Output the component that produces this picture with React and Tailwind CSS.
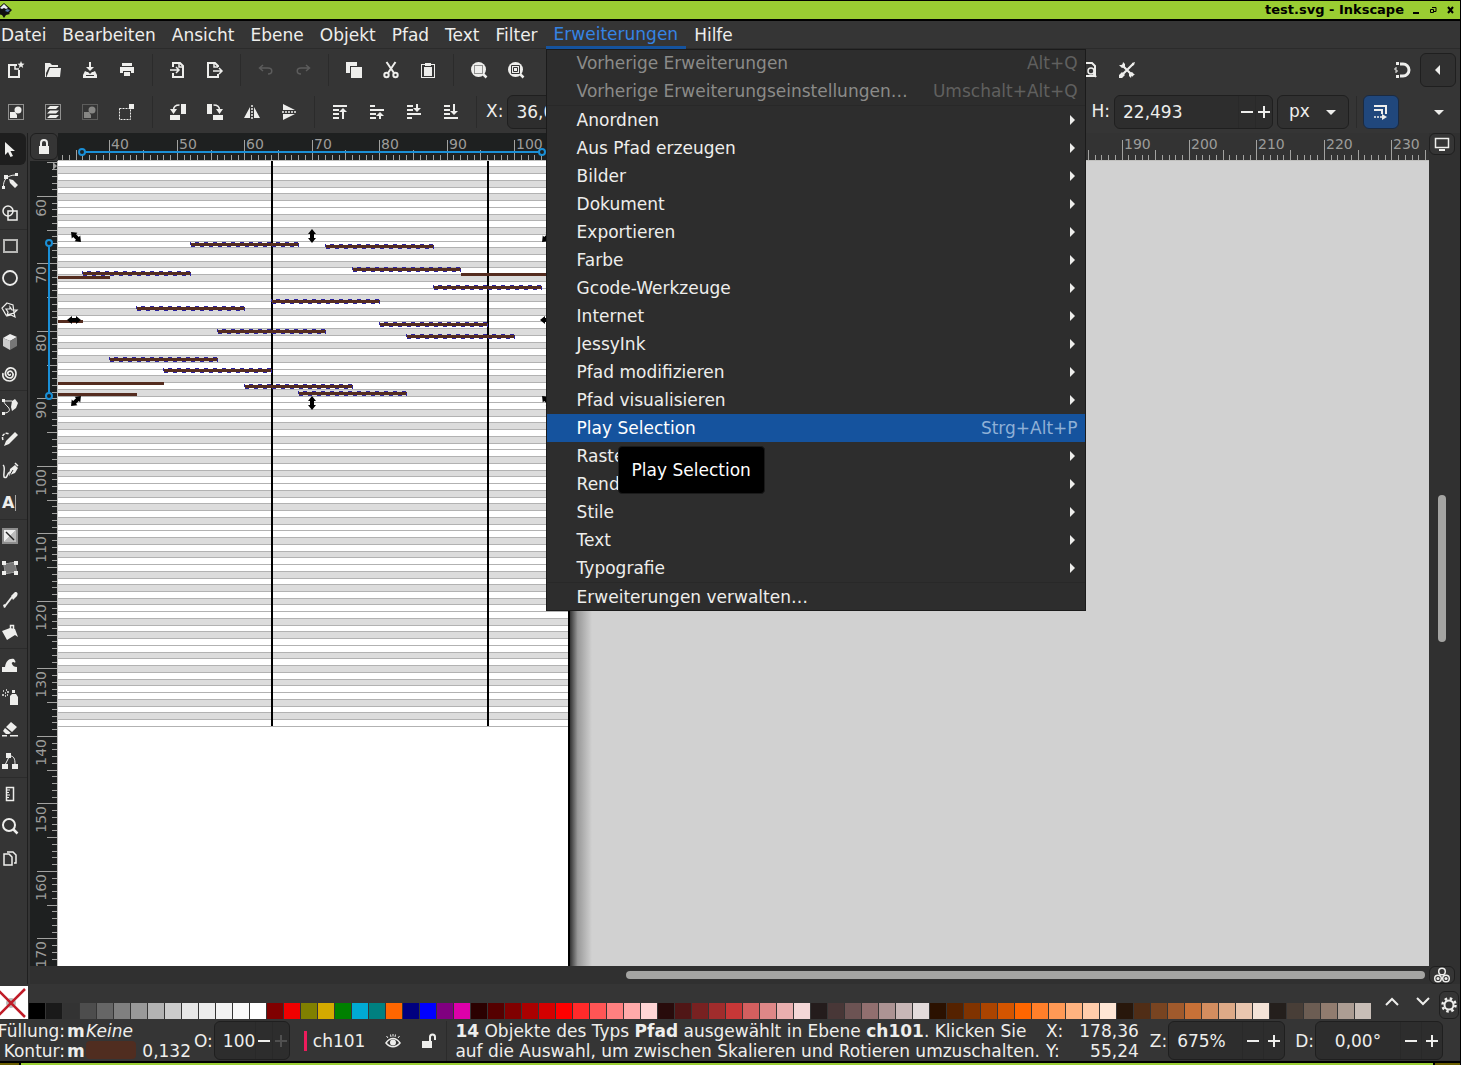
import React, { useState } from "react";

const menus = ["Datei", "Bearbeiten", "Ansicht", "Ebene", "Objekt", "Pfad", "Text", "Filter", "Erweiterungen", "Hilfe"];

const extensionItems = [
  { label: "Vorherige Erweiterungen", keys: "Alt+Q", disabled: true },
  { label: "Vorherige Erweiterungseinstellungen…", keys: "Umschalt+Alt+Q", disabled: true },
  null,
  { label: "Anordnen", sub: true },
  { label: "Aus Pfad erzeugen", sub: true },
  { label: "Bilder", sub: true },
  { label: "Dokument", sub: true },
  { label: "Exportieren", sub: true },
  { label: "Farbe", sub: true },
  { label: "Gcode-Werkzeuge", sub: true },
  { label: "Internet", sub: true },
  { label: "JessyInk", sub: true },
  { label: "Pfad modifizieren", sub: true },
  { label: "Pfad visualisieren", sub: true },
  { label: "Play Selection", keys: "Strg+Alt+P", active: true },
  { label: "Raster", sub: true },
  { label: "Rendern", sub: true },
  { label: "Stile", sub: true },
  { label: "Text", sub: true },
  { label: "Typografie", sub: true },
  null,
  { label: "Erweiterungen verwalten…" },
];

const palette = (
  "000000 1a1a1a 333333 4d4d4d 666666 808080 999999 b3b3b3 cccccc e6e6e6 ececec f2f2f2 f9f9f9 ffffff " +
  "800000 f00000 808000 d4aa00 008000 00aad4 008080 ff6600 000080 0000ff 800080 dd00aa " +
  "2b0000 550000 800000 aa0000 d40000 ff0000 ff2a2a ff5555 ff8080 ffaaaa ffd5d5 " +
  "280b0b 501616 782121 a02c2c c83737 d35f5f de8787 e9afaf f4d7d7 " +
  "241c1c 483737 6c5353 916f6f ac9393 c8b7b7 e3dbdb " +
  "2b1100 552200 803300 aa4400 d45500 ff6600 ff7f2a ff9955 ffb380 ffccaa ffe6d5 " +
  "28170b 502d16 784421 a05a2c c87137 d38d5f deaa87 e9c6af f4e3d7 " +
  "241f1c 483e37 6c5d53 917c6f ac9d93 c8beb7"
).split(" ");

const dotted = <rect x="0.5" y="0.5" width="15" height="15" fill="none" stroke="currentColor" strokeDasharray="1 1" />;
const line = { fill: "none", stroke: "currentColor", strokeWidth: 1.5 };

// all drawn on a 16 x 16 grid
const icons = {
  new: (
    <>
      <path d="M9 3H1v12h10V8" {...line} strokeWidth="2" />
      <path d="M7 3v4h4" {...line} />
      <path d="M13 -1l1 2.500 2.500.2-2 1.700.7 2.600-2.200-1.400-2.200 1.400.7-2.600-2-1.700 2.500-.2z" />
    </>
  ),
  open: <path d="M0 1h5l2 2h6v2H4L1 11v4H0zM5 6h11l-1 9H1.500z" />,
  save: <path d="M7 0h2v5h3L8 9 4 5h3zM3 9l2 1h1l2 2 2-2h1l2-1 2 4v3H1v-3zM4 13v1h8v-1z" fillRule="evenodd" />,
  print: <path d="M3 1h10v3H3zM1 5h14v6h-3V9H4v2H1zM5 10h6v4H5z" />,
  import: (
    <>
      <path d="M3 5V1h7l3 3v11H3v-4" {...line} strokeWidth="2" />
      <path d="M9 1v4h4M0 8h8M6 5l3 3-3 3" {...line} />
    </>
  ),
  export: (
    <>
      <path d="M11 5V4L8 1H1v14h10v-3" {...line} strokeWidth="2" />
      <path d="M6 9h9M12 6l3 3-3 3M7 1v4h4" {...line} />
    </>
  ),
  undo: <path d="M5 3L1.500 6 5 9M2 6h8c5 0 5 6 0 6" {...line} />,
  redo: <path d="M11 3l3.500 3L11 9M14 6H6c-5 0-5 6 0 6" {...line} />,
  copy: <path d="M0 0h11v4H4v7H0zM5 5h11v11H5z" />,
  cut: (
    <>
      <path d="M3.500 0l7.500 11M12.500 0L5 11" {...line} strokeWidth="2" />
      <circle cx="3.500" cy="13" r="2.200" {...line} strokeWidth="2" />
      <circle cx="12.500" cy="13" r="2.200" {...line} strokeWidth="2" />
    </>
  ),
  paste: (
    <>
      <rect x="1.500" y="2.500" width="13" height="13" fill="none" stroke="currentColor" />
      <path d="M5 1h6v3H5zM4 5h8v9H4z" />
    </>
  ),
  zoomSel: (
    <>
      <circle cx="7.500" cy="7.500" r="7.500" />
      <path d="M11 11l4.500 4.500" {...line} strokeWidth="2.500" />
      <rect x="3.500" y="3.500" width="8" height="8" fill="none" stroke="#333" strokeDasharray="1 1" />
    </>
  ),
  zoomDraw: (
    <>
      <circle cx="7.500" cy="7.500" r="7.500" />
      <path d="M11 11l4.500 4.500" {...line} strokeWidth="2.500" />
      <path d="M3.500 3.500h8v8h-8zM5.500 5.500h4v4h-4z" fill="none" stroke="#333" />
    </>
  ),
  docProps: (
    <>
      <path d="M2 1h8l3 3v10H2z" {...line} strokeWidth="2" />
      <circle cx="9" cy="9" r="3" {...line} />
      <path d="M11 11l3 4" {...line} strokeWidth="2" />
    </>
  ),
  tools: (
    <>
      <path d="M3 3l11 11M14.500 1.500L2 14" {...line} strokeWidth="2.200" />
      <path d="M0 3l3 3 3-1V2L4 0l-.5 2.500L2 3zM16 13l-3-3-3 1v3l2 2 .5-2.500L14 13zM13 1l3-1-1 3-2 1zM0 13l3-3 3 3-3 3H0z" />
    </>
  ),
  snap: (
    <>
      <path d="M6 2h3a6 6 0 010 12H6" {...line} strokeWidth="3" />
      <path d="M2 0h3v3H2zM2 13h3v3H2z" />
      <path d="M3 6H1v2h2v2H1" {...line} strokeWidth="1" />
    </>
  ),
  selAll: (
    <>
      {dotted}
      <circle cx="10" cy="6" r="3.500" />
      <path d="M2 8h5l2 3v3H2z" />
    </>
  ),
  selLayers: (
    <>
      {dotted}
      <path d="M5 2h9l-3 3H2zM5 6.500h9l-3 3H2zM5 11h9l-3 3H2z" />
    </>
  ),
  deselect: (
    <>
      <rect x="0.500" y="4.500" width="11" height="11" {...line} strokeWidth="1" strokeDasharray="2 1" />
      <path d="M10 0h5v5h-5z" />
    </>
  ),
  rotL: (
    <>
      <path d="M11 0h5v10h-5zM0 11h10v5H0zM0 5h7L3.500 10z" />
      <path d="M3.500 6c0-3 2-5 6-5" {...line} />
    </>
  ),
  rotR: (
    <>
      <path d="M0 0h5v10H0zM6 11h10v5H6zM9 5h7l-3.500 5z" />
      <path d="M12.500 6c0-3-2-5-6-5" {...line} />
    </>
  ),
  flipH: (
    <>
      <path d="M6 3v11H0zM10 3v11h6z" />
      <path d="M8 1v14" {...line} strokeDasharray="2 1" />
    </>
  ),
  flipV: (
    <>
      <path d="M2 6h12L2 0zM2 10h12L2 16z" />
      <path d="M1 8h14" {...line} strokeDasharray="2 1" />
    </>
  ),
  toTop: (
    <>
      <path d="M1 2h14M1 6h6M1 10h6M1 14h6" {...line} strokeWidth="2" />
      <path d="M10 15h2V8h3l-4-4-4 4h3z" />
    </>
  ),
  raise: (
    <>
      <path d="M1 2h5M1 6h14M1 10h6M1 14h6" {...line} strokeWidth="2" />
      <path d="M10 15h2v-3h3l-4-4-4 4h3z" />
    </>
  ),
  lower: (
    <>
      <path d="M1 2h6M1 6h6M1 10h14M1 14h5" {...line} strokeWidth="2" />
      <path d="M10 0h2v4h3l-4 4-4-4h3z" />
    </>
  ),
  toBottom: (
    <>
      <path d="M1 2h6M1 6h6M1 10h6M1 14h14" {...line} strokeWidth="2" />
      <path d="M10 0h2v7h3l-4 4-4-4h3z" />
    </>
  ),
  select: <path d="M3 1l10 9H8.500l2.500 5-2.500 1L6 11l-3 3z" />,
  node: (
    <>
      <path d="M1.500 14C1 7 5 2 14 2" {...line} strokeWidth="1" />
      <path d="M0 13h3v3H0zM13 0h3v3h-3zM2 2h4v4H2zM7 6l4 1 5 5-3 3-5-5z" />
    </>
  ),
  shapes: (
    <>
      <circle cx="6" cy="6" r="5" {...line} />
      <rect x="6" y="6" width="9" height="9" {...line} />
    </>
  ),
  rect: <rect x="2" y="2" width="13" height="12" {...line} strokeWidth="2" stroke="#b8b8b6" />,
  ellipse: <circle cx="8" cy="8" r="7" {...line} strokeWidth="1.800" />,
  star: <path d="M5 1l6 2 1 8-8 2-4-7zM8 5l2 3h5l-3 3 1 4-4-2-4 1 1-4-2-3 4 0z" {...line} strokeWidth="1.200" />,
  box: (
    <>
      <path d="M8 0l7 3-7 4-7-3z" fill="#eee" />
      <path d="M1 4l7 3v9l-7-4z" fill="#ccc" />
      <path d="M15 3v9l-7 4V7z" fill="#777" />
    </>
  ),
  spiral: <path d="M8 8c1 1-1 2-2 0s2-4 4-2 1 6-2 6-6-3-4-7 7-4 9-1 1 10-5 11C3 15 0 12 1 7" {...line} strokeWidth="1.600" />,
  pen: (
    <>
      <path d="M2 14c5 0 7-3 4-6S2 4 2 2h8" {...line} strokeWidth="1" />
      <path d="M0 0h3v3H0zM0 13h3v3H0zM10 2l3-2 3 4-2 5-4 3-1-4z" />
    </>
  ),
  pencil: (
    <>
      <path d="M2 15l2-5 9-9 3 3-9 9z" />
      <path d="M1 9C-1 4 3 1 7 3" {...line} strokeDasharray="3 1" />
    </>
  ),
  calligraphy: (
    <>
      <path d="M1 2c3 2 0 9 1 12 4 2 2-3 6-5" {...line} />
      <path d="M7 13l1-7 5-4 3 3-3 5-5 2z" />
      <path d="M8 12l3-5" fill="none" stroke="#333" />
      <path d="M13 0l3 3" {...line} />
    </>
  ),
  gradient: (
    <>
      <rect width="16" height="16" fill="#8e8e8e" />
      <path d="M2 2h12L8 8zM2 2v12l6-6z" fill="#eee" />
      <path d="M14 2v12H2z" fill="#bbb" />
      <path d="M4 4l8 8" stroke="#222" strokeWidth="1.500" />
    </>
  ),
  mesh: (
    <>
      <path d="M2 3c4 2 8-2 12 0-2 4 2 7 0 10-4-2-8 2-12 0 2-4-1-7 0-10z" fill="#777" stroke="#999" />
      <path d="M0 1h4v4H0zM12 1h4v4h-4zM0 11h4v4H0zM12 11h4v4h-4z" />
    </>
  ),
  dropper: (
    <>
      <path d="M3 14l7-9" {...line} strokeWidth="2" />
      <path d="M9 4l4-4c3 0 3 2 2 4l-4 4zM1 13l2-1 1 3-2 1z" />
    </>
  ),
  bucket: (
    <>
      <path d="M0 7l8-3 5 1 3 8-3-2-8 5z" />
      <path d="M8.500 9V1.500h3V7" {...line} strokeWidth="1.500" />
    </>
  ),
  tweak: <path d="M0 10h3c1-6 4-9 9-8 1 2 2 2 1 4-1-2-4-1-3 1 1 2 2 3 5 3v5H0z" />,
  spray: (
    <>
      <path d="M8 7l2-2h4l2 3v8H8zM10 1h3v3h-3z" />
      <path d="M1 2h1M4 1h1M3 4h1M0 6h2M5 3h2M5 6h1M3 7h1" {...line} />
    </>
  ),
  eraser: <path d="M9 1l6 5-5 5-6-5zM3 7l6 5-2 1H4L1 10zM0 14h5v1.500H0zM8 14h8v1.500H8z" />,
  connector: (
    <>
      <path d="M3 12L7 4M8 3c4 0 5 3 5 8" {...line} strokeWidth="1" />
      <path d="M4 0h5v5H4zM0 11h6v5H0zM10 11h6v5h-6z" />
    </>
  ),
  measure: (
    <>
      <rect x="4.500" y="1.500" width="7" height="13" {...line} />
      <path d="M5 4h3M5 6.500h2M5 9h3M5 11.500h2" {...line} strokeWidth="1" />
    </>
  ),
  zoom: (
    <>
      <circle cx="7" cy="7" r="6" {...line} strokeWidth="2" />
      <path d="M11 11l4.500 4.500" {...line} strokeWidth="2.500" />
    </>
  ),
  pages: (
    <>
      <path d="M2 4h5l3 3v8H2z" {...line} />
      <path d="M5 2h6l3 3v8h-2" {...line} />
    </>
  ),
  scale: (
    <>
      <path d="M1 2h12v8M1 6h8v4" {...line} strokeWidth="2" />
      <path d="M1 13h9" {...line} strokeDasharray="2 1" />
      <path d="M9 10l5 3-5 3z" />
    </>
  ),
  lock: <path d="M3 7h1V4a4 4 0 018 0v3h1v8H3zM6 7h4V4a2 2 0 00-4 0z" fillRule="evenodd" />,
  unlock: <path d="M1 8h7V4a3.500 3.500 0 017 0v3h-2V4a1.500 1.500 0 00-3 0v4h1v7H1z" />,
  monitor: (
    <>
      <rect x="1.500" y="2.500" width="13" height="9" {...line} />
      <path d="M5 13h6v2H5z" />
    </>
  ),
  cms: (
    <>
      <circle cx="8" cy="4.500" r="3.300" {...line} />
      <circle cx="4" cy="11.500" r="3.300" {...line} />
      <circle cx="12" cy="11.500" r="3.300" {...line} />
      <circle cx="4" cy="11.500" r="1.500" />
      <circle cx="12" cy="11.500" r="1.500" />
    </>
  ),
  gear: (
    <>
      <circle cx="8" cy="8" r="4.500" {...line} strokeWidth="2" />
      <circle cx="8" cy="8" r="6.500" {...line} strokeWidth="2.500" strokeDasharray="2.500 2.600" />
    </>
  ),
  eye: (
    <>
      <path d="M1 10c4-6 10-6 14 0-4 5-10 5-14 0z" {...line} />
      <circle cx="8" cy="9.500" r="3" />
      <path d="M3 5L1.500 3M6 4l-.5-2.500M10 4l.5-2.500M13 5l1.500-2M8 3.500V1" {...line} strokeWidth="1" />
    </>
  ),
  up: <path d="M2 11l6-6 6 6" {...line} strokeWidth="2" />,
  down: <path d="M2 4l6 6 6-6" {...line} strokeWidth="2" />,
  caretDown: <path d="M3 6h10l-5 5z" />,
  caretLeft: <path d="M10 3v10L5 8z" />,
  minus: <path d="M2 8h12" {...line} strokeWidth="2" />,
  plus: <path d="M2 8h12M8 2v12" {...line} strokeWidth="2" />,
};

const Icon = ({ name, className = "" }) => (
  <svg viewBox="0 0 16 16" fill="currentColor" className={`size-4 shrink-0 overflow-visible ${className}`} aria-hidden="true">
    {icons[name]}
  </svg>
);

const ToolButton = ({ name, color = "" }) => (
  <button aria-label={name} className={`flex h-9 w-[37px] shrink-0 items-center justify-center ${color}`}>
    <Icon name={name} />
  </button>
);

const Separator = () => (
  <div className="flex h-8 w-[14px] shrink-0 justify-center">
    <div className="w-px bg-[#2b2b2b]" />
  </div>
);

const SpinBox = ({ label, value, width, gap = "mr-1", buttons = "w-[21px]", center, noPlus, height = "h-[34px]" }) => (
  <div className="flex shrink-0 items-center">
    <label htmlFor={`spin-${label}`} className={gap}>{label}:</label>
    <div className={`flex items-center overflow-hidden rounded-md border border-[#1f1f1f] bg-[#2d2d2d] ${width} ${height}`}>
      <input
        id={`spin-${label}`}
        defaultValue={value}
        className={`h-full min-w-0 flex-1 bg-transparent outline-none ${center ? "text-center" : "pl-2"}`}
      />
      <button aria-label="weniger" className={`flex h-full items-center justify-center border-l border-[#292929] ${buttons}`}>
        <Icon name="minus" />
      </button>
      <button
        aria-label="mehr"
        className={`flex h-full items-center justify-center border-l border-[#292929] ${buttons} ${noPlus ? "text-[#505050]" : ""}`}
      >
        <Icon name="plus" />
      </button>
    </div>
  </div>
);

const TitleBar = () => (
  <header className="flex h-[21px] shrink-0 items-center border-t border-b-2 border-black bg-[#9acd32] text-[13px] font-bold text-black">
    <svg viewBox="0 0 16 16" className="-ml-1 size-4" aria-hidden="true">
      <path d="M8 1l8 7-3 3 1 1-4 1-2 3-2-3-4-1 1-1-3-3z" fill="#111" />
      <path d="M8 2l4 4-2 1-2-1-2 1-2-1z" fill="#e8eef5" />
      <path d="M11 7l3 1-2 2-3-1z" fill="#5577aa" />
    </svg>
    <h1 className="ml-auto">test.svg - Inkscape</h1>
    <div className="ml-1 flex gap-px pr-[2px]">
      <button aria-label="Minimieren" className="size-4">
        <svg viewBox="0 0 16 16" className="size-4"><path d="M5 10h6v2H5z" /></svg>
      </button>
      <button aria-label="Wiederherstellen" className="size-4">
        <svg viewBox="0 0 16 16" className="size-4"><path d="M7 5.500h4v4h-2M5.500 7.500h3v3h-3z" fill="none" stroke="#000" /></svg>
      </button>
      <button aria-label="Schließen" className="size-4">
        <svg viewBox="0 0 16 16" className="size-4"><path d="M6 5l5 6M11 5l-5 6" stroke="#000" strokeWidth="2" /></svg>
      </button>
    </div>
  </header>
);

const ExtensionMenu = () => (
  <div className="absolute top-full left-0 z-10 mt-px w-[540px] bg-[#2d2d2d]" role="menu">
    {extensionItems.map((item, i) =>
      item === null ? (
        <div key={i} className="h-px bg-[#282828]" />
      ) : (
        <button
          key={i}
          role="menuitem"
          disabled={item.disabled}
          className={`flex h-7 w-full items-center justify-between pt-[2px] pr-2 pl-[31px] ${item.active ? "bg-[#15539e] text-white" : ""} ${item.disabled ? "text-[#8b8b89]" : ""}`}
        >
          <span>{item.label}</span>
          {item.keys && <span className={item.active ? "text-[#8fb0d6]" : "text-[#60605f]"}>{item.keys}</span>}
          {item.sub && (
            <svg viewBox="0 0 5 10" className="mr-[3px] mb-[2px] h-[10px] w-[5px]" fill="currentColor"><path d="M0 0l5 5-5 5z" /></svg>
          )}
        </button>
      )
    )}
    <div className="pointer-events-none absolute inset-0 border border-[#1b1b1b]" />
    <div role="tooltip" className="absolute top-[397px] left-[72px] rounded-sm border border-[#1a1a1a] bg-black px-[13px] py-[10px] leading-[26px] text-white">
      Play Selection
    </div>
  </div>
);

const MenuBar = () => {
  const [open] = useState("Erweiterungen");
  return (
    <nav className="-ml-[7px] flex h-7 shrink-0 items-stretch border-b border-[#2b2b2b]">
      {menus.map((name) => (
        <div key={name} className="relative flex">
          <button className={`px-2 ${open === name ? "-mb-px border-b-3 border-[#15539e] pt-px text-[#3584e4]" : "pt-[2px]"}`}>{name}</button>
          {open === name && <ExtensionMenu />}
        </div>
      ))}
    </nav>
  );
};

const CommandBar = () => (
  <div className="flex h-[42px] shrink-0 items-center pr-1">
    <div className="-ml-[3px] flex items-center">
      {["new", "open", "save", "print"].map((n) => <ToolButton key={n} name={n} />)}
      <Separator />
      {["import", "export"].map((n) => <ToolButton key={n} name={n} />)}
      <Separator />
      {["undo", "redo"].map((n) => <ToolButton key={n} name={n} color="text-[#5c5c5c]" />)}
      <Separator />
      {["copy", "cut", "paste"].map((n) => <ToolButton key={n} name={n} />)}
      <Separator />
      {["zoomSel", "zoomDraw"].map((n) => <ToolButton key={n} name={n} />)}
    </div>
    <div className="grow-[535]" />
    <ToolButton name="docProps" />
    <ToolButton name="tools" />
    <div className="grow-[237]" />
    <ToolButton name="snap" />
    <button aria-label="Einrastleiste" className="flex h-[34px] w-9 items-center justify-center rounded-md border border-[#1f1f1f] bg-[#303030]">
      <Icon name="caretLeft" />
    </button>
  </div>
);

const ControlBar = () => (
  <div className="flex h-[42px] shrink-0 items-center pr-[3px]">
    <div className="-ml-[3px] flex items-center">
      <ToolButton name="selAll" />
      <ToolButton name="selLayers" />
      <ToolButton name="selAll" color="text-[#868684]" />
      <ToolButton name="deselect" />
      <Separator />
      {["rotL", "rotR", "flipH", "flipV"].map((n) => <ToolButton key={n} name={n} />)}
      <Separator />
      {["toTop", "raise", "lower", "toBottom"].map((n) => <ToolButton key={n} name={n} />)}
      <Separator />
      <div className="ml-[3px]">
        <SpinBox label="X" value="36,000" width="w-[158px]" />
      </div>
    </div>
    <div className="ml-auto flex items-center">
      <SpinBox label="H" value="22,493" width="w-[159px]" buttons="w-[17px]" />
      <div className="relative ml-1 flex items-center">
        <select aria-label="Einheit" className="h-[34px] w-[72px] appearance-none rounded-md border border-[#1f1f1f] bg-[#303030] pl-[11px]">
          <option>px</option>
        </select>
        <Icon name="caretDown" className="pointer-events-none absolute right-[10px]" />
      </div>
      <Separator />
      <button aria-label="Konturbreite skalieren" className="flex h-[34px] w-9 items-center justify-center rounded-md border border-[#1b2a40] bg-[#20477c]">
        <Icon name="scale" />
      </button>
      <button aria-label="Mehr" className="ml-[22px] flex h-9 w-9 items-center justify-center">
        <Icon name="caretDown" />
      </button>
    </div>
  </div>
);

const toolGroups = [
  ["select", "node", "shapes"],
  ["rect", "ellipse", "star", "box", "spiral"],
  ["pen", "pencil", "calligraphy", "text"],
  ["gradient", "mesh", "dropper", "bucket"],
  ["tweak", "spray", "eraser", "connector"],
  ["measure", "zoom", "pages"],
];

const ToolBox = () => (
  <aside className="w-[28px] shrink-0 divide-y divide-[#2b2b2b] border-r border-[#1f1f1f]">
    {toolGroups.map((group, i) => (
      <div key={i}>
        {group.map((name) => (
          <button
            key={name}
            aria-label={name}
            className={`flex h-8 w-[26px] items-center rounded-r-md pl-[2px] ${name === "select" ? "bg-[#1e1e1e]" : ""}`}
          >
            {name === "text" ? (
              <span className="flex items-center text-base leading-4 font-bold">
                A<i className="ml-px h-4 w-px bg-[#aaa]" />
              </span>
            ) : (
              <Icon name={name} />
            )}
          </button>
        ))}
      </div>
    ))}
  </aside>
);

// one user unit in screen pixels at the current zoom
const UNIT = 6.748;
const tickLength = (v) => (v % 10 === 0 ? 20 : v % 5 === 0 ? 10 : 5);
const range = (from, to) => Array.from({ length: to - from + 1 }, (_, i) => from + i);
const underMenu = (v) => v > 100 && v < 190;

const HorizontalRuler = () => (
  <svg className="h-7 min-w-0 flex-1 bg-[#333333]" aria-hidden="true">
    <rect width="512" height="28" fill="#1e2020" />
    {range(33, 235).map((v) => {
      const x = Math.round(51.300 + (v - 40) * UNIT);
      return (
        <g key={v}>
          <rect x={x} y={27 - tickLength(v)} width="1" height={tickLength(v)} fill="#a2a2a0" />
          {v % 10 === 0 && !underMenu(v) && <text x={x + 2} y="16" fontSize="14" fill="#9c9c9a">{v}</text>}
        </g>
      );
    })}
    <rect y="27" width="100%" height="1" fill="#c0c0be" />
    <g fill="none" stroke="#1a8fd6" strokeWidth="2">
      <path d="M27 19h454" />
      <circle cx="24" cy="19" r="3" />
      <circle cx="484" cy="19" r="3" />
    </g>
  </svg>
);

const VerticalRuler = () => (
  <svg className="h-full w-[28px] shrink-0 bg-[#1e2020]" aria-hidden="true">
    {range(55, 173).map((v) => {
      const y = Math.round(35 + (v - 60) * UNIT);
      return (
        <g key={v}>
          <rect x={27 - tickLength(v)} y={y} width={tickLength(v)} height="1" fill="#a2a2a0" />
          {v % 10 === 0 && (
            <text transform={`translate(16 ${y + 3}) rotate(-90)`} textAnchor="end" fontSize="14" fill="#9c9c9a">{v}</text>
          )}
        </g>
      );
    })}
    <path d="M23 1l4 4-4 4" fill="#a2a2a0" />
    <rect x="27" width="1" height="100%" fill="#c0c0be" />
    <g fill="none" stroke="#1a8fd6" strokeWidth="2">
      <path d="M19 85v147" />
      <circle cx="19" cy="82" r="3" />
      <circle cx="19" cy="235" r="3" />
    </g>
  </svg>
);

const blackKeys = [1, 3, 6, 8, 10];
const selectedNotes = [
  [191, 244], [326, 246], [353, 269], [434, 287], [272, 301], [137, 308], [380, 324],
  [218, 331], [407, 336], [110, 359], [164, 370], [245, 386], [299, 393], [83, 273],
];
const otherNotes = [[50, 110, 277], [461, 568, 274], [50, 83, 321], [50, 164, 383], [50, 137, 394]];
const handles = [[76, 237, -45], [312, 236, 0], [547, 237, 45], [76, 401, 45], [312, 403, 0], [547, 401, -45], [74, 320, 90], [547, 320, 90]];

const Canvas = () => (
  <svg className="h-full min-w-0 flex-1 bg-[#d1d1d1]" aria-label="Zeichenfläche">
    <defs>
      <linearGradient id="page-shadow">
        <stop offset="0" stopColor="#333" />
        <stop offset="0.350" stopColor="#999" />
        <stop offset="1" stopColor="#d1d1d1" />
      </linearGradient>
    </defs>
    <g transform="translate(-58 -161)">
      <rect x="570" y="0" width="22" height="2000" fill="url(#page-shadow)" />
      <rect x="0" y="0" width="568" height="2000" fill="#fff" />
      <rect x="568" y="0" width="2" height="2000" fill="#000" />
      {/* one row per midi key, counted from the lowest C */}
      {range(0, 84).map((key) => {
        const top = 726.300 - (key + 1) * 6.740;
        return (
          <g key={key}>
            {blackKeys.includes(key % 12) && <rect x="0" y={top} width="568" height="6.740" fill="#dcdcdc" />}
            <rect x="0" y={Math.round(top + 6.240)} width="568" height="1" fill="#b2b2b2" />
          </g>
        );
      })}
      <path d="M272 0v726M488 0v726" stroke="#000" strokeWidth="2" />
      {otherNotes.map(([x1, x2, y]) => (
        <rect key={`${x1}-${y}`} x={x1} y={y - 1} width={x2 - x1} height="3" fill="#552d20" />
      ))}
      {selectedNotes.map(([x, y]) => (
        <g key={`${x}-${y}`}>
          <rect x={x} y={y - 1} width="108" height="3" fill="#552d20" />
          <path d={`M${x + 4} ${y - 1.500}h104M${x} ${y + 2.500}h108`} stroke="#2b22a0" strokeDasharray="4 5" />
          <path d={`M${x - 0.500} ${y - 2}v3M${x + 107.500} ${y}v3`} stroke="#2b22a0" />
        </g>
      ))}
      {handles.map(([x, y, angle]) => (
        <path
          key={`${x}-${y}`}
          transform={`translate(${x} ${y}) rotate(${angle})`}
          d="M0 -7l4 5H2v4h2L0 7l-4-5h2v-4h-2z"
        />
      ))}
    </g>
  </svg>
);

const Workspace = () => (
  <div className="flex min-w-0 flex-1 flex-col pl-[2px]">
    <div className="flex h-7 shrink-0">
      <button aria-label="Hilfslinien sperren" className="flex h-[27px] w-[28px] items-center justify-center rounded-md border border-[#1f1f1f] bg-[#353535]">
        <Icon name="lock" />
      </button>
      <HorizontalRuler />
      <div className="w-[31px] bg-[#303030]">
        <button aria-label="Anzeige" className="flex h-[22px] w-[26px] items-center justify-center rounded-md border border-[#1f1f1f] bg-[#353535]">
          <Icon name="monitor" />
        </button>
      </div>
    </div>
    <div className="flex min-h-0 flex-1">
      <VerticalRuler />
      <Canvas />
      <div className="flex w-[31px] shrink-0 flex-col bg-[#303030] pl-[9px]">
        <div className="grow-[334]" />
        <div className="w-2 grow-[147] rounded-full bg-[#a4a4a2]" />
        <div className="grow-[324]" />
      </div>
    </div>
    <div className="flex h-[18px] shrink-0 items-center bg-[#303030]">
      <div className="grow-[596]" />
      <div className="h-2 grow-[799] rounded-full bg-[#a4a4a2]" />
      <button aria-label="Farbmanagement" className="mr-[5px] ml-1 flex h-[18px] w-[26px] items-center justify-center rounded-md border border-[#1f1f1f] bg-[#353535]">
        <Icon name="cms" />
      </button>
    </div>
  </div>
);

const PaletteBar = () => (
  <div className="flex h-9 shrink-0 items-end pr-px pb-px">
    <button aria-label="Keine Farbe" className="mr-px w-7 shrink-0 bg-white">
      <svg viewBox="0 0 28 33" className="h-[33px] w-7">
        <circle cx="11" cy="17" r="5" fill="#bbb" />
        <path d="M-3 3l28 28M25 3L-3 31" stroke="#c01c28" strokeWidth="2.500" />
      </svg>
    </button>
    <div className="flex min-w-0 gap-px overflow-hidden">
      {palette.map((hex, i) => (
        <button key={i} aria-label={`#${hex}`} className="size-4 shrink-0" style={{ backgroundColor: `#${hex}` }} />
      ))}
    </div>
    <div className="ml-auto flex items-center gap-[15px] self-center">
      <button aria-label="Nach oben"><Icon name="up" /></button>
      <button aria-label="Nach unten"><Icon name="down" /></button>
    </div>
    <button aria-label="Palette einrichten" className="ml-2 flex h-7 w-5 items-center justify-center rounded-md border border-[#1f1f1f]">
      <Icon name="gear" />
    </button>
  </div>
);

const StatusBar = () => (
  <footer className="flex h-[41px] shrink-0 items-center overflow-hidden leading-5 whitespace-nowrap">
    <div className="flex w-[65px] shrink-0 flex-col items-end">
      <span>Füllung:</span>
      <span>Kontur:</span>
    </div>
    <div className="flex w-[19px] shrink-0 flex-col pl-[2px] font-bold">
      <span>m</span>
      <span>m</span>
    </div>
    <div className="flex w-[107px] shrink-0 flex-col pl-[2px]">
      <i>Keine</i>
      <div className="flex justify-between">
        <span className="h-[18px] w-[50px] rounded-sm bg-[#502d20]" />
        <span>0,132</span>
      </div>
    </div>
    <div className="ml-[3px]">
      <SpinBox label="O" value="100" width="w-[76px]" gap="mr-px" buttons="w-[17px]" height="h-[39px]" noPlus />
    </div>
    <div className="ml-[14px] h-5 w-[3px] shrink-0 bg-[#ed1c5c]" />
    <span className="ml-[6px]">ch101</span>
    <button aria-label="Ebene sichtbar" className="ml-5"><Icon name="eye" /></button>
    <button aria-label="Ebene sperren" className="ml-5"><Icon name="unlock" /></button>
    <p className="ml-[9px] border-l border-[#2b2b2b] pl-2">
      <b>14</b> Objekte des Typs <b>Pfad</b> ausgewählt in Ebene <b>ch101</b>. Klicken Sie
      <br />
      auf die Auswahl, um zwischen Skalieren und Rotieren umzuschalten.
    </p>
    <div className="ml-auto grid shrink-0 grid-cols-[auto_auto] gap-x-4">
      <span>X:</span>
      <span className="text-right">178,36</span>
      <span>Y:</span>
      <span className="text-right">55,24</span>
    </div>
    <div className="ml-[11px]">
      <SpinBox label="Z" value="675%" width="w-[117px]" gap="mr-px" height="h-[39px]" />
    </div>
    <div className="mr-[17px] ml-[10px]">
      <SpinBox label="D" value="0,00°" width="w-[128px]" gap="mr-px" height="h-[39px]" center />
    </div>
  </footer>
);

const App = () => (
  <div className="flex h-screen flex-col overflow-hidden border-r border-black bg-[#353535] font-['DejaVu_Sans',sans-serif] text-[17px] text-[#eeeeec]">
    <TitleBar />
    <MenuBar />
    <CommandBar />
    <ControlBar />
    <main className="flex min-h-0 flex-1">
      <ToolBox />
      <Workspace />
    </main>
    <PaletteBar />
    <StatusBar />
    <div className="flex h-1 shrink-0 gap-[2px] border-t-2 border-black bg-black">
      <div className="w-[19px] bg-[#6b5f00]" />
      <div className="flex-1 bg-[#9acd32]" />
      <div className="w-[25px] bg-[#6b5f00]" />
    </div>
  </div>
);

export default App;
